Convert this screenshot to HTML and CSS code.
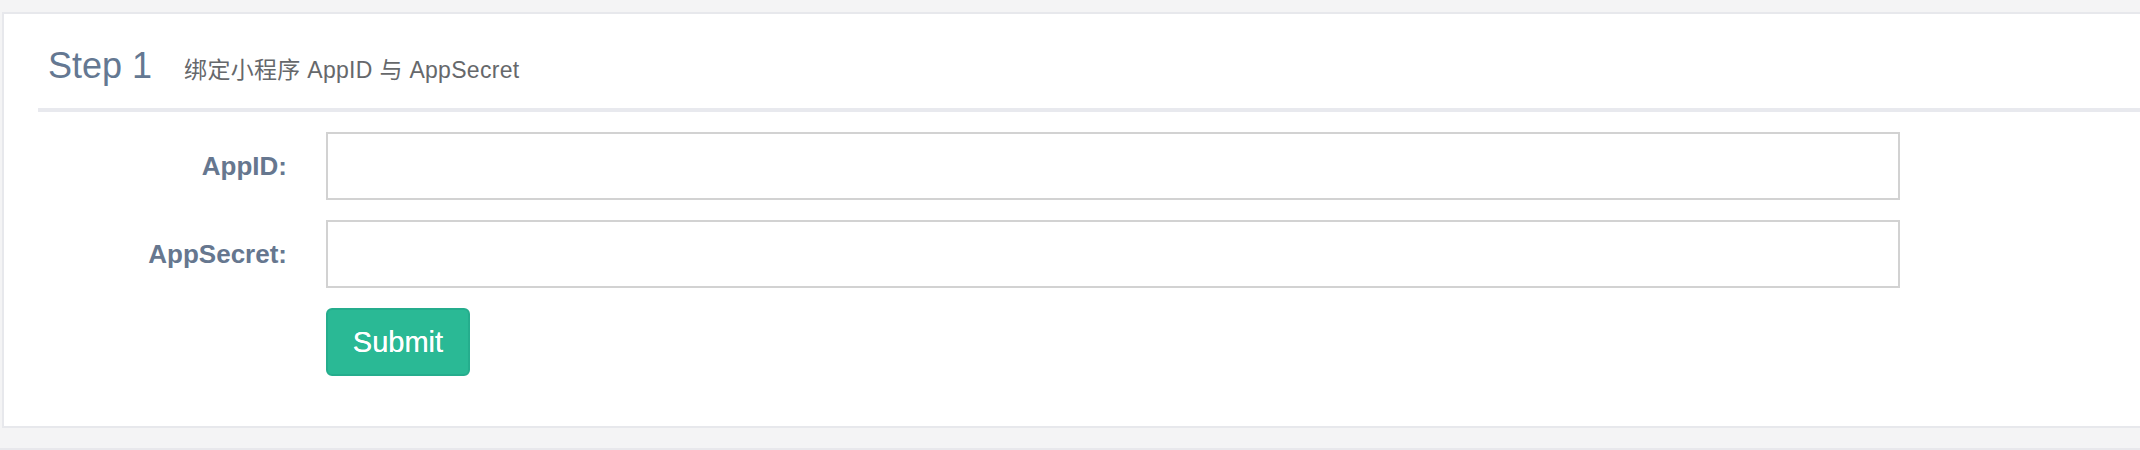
FILE: index.html
```html
<!DOCTYPE html>
<html lang="zh-CN">
<head>
<meta charset="utf-8">
<title>Step 1</title>
<link rel="stylesheet" href="styles.css">
</head>
<body>
<div class="page">
  <section class="panel">
    <div class="panel-inner">
      <header class="panel-head">
        <h2 class="step">Step 1</h2>
        <span class="subtitle">绑定小程序 AppID 与 AppSecret</span>
      </header>
      <form class="form">
        <label class="label" for="appid">AppID:</label>
        <input class="input" id="appid" type="text">
        <label class="label" for="appsecret">AppSecret:</label>
        <input class="input" id="appsecret" type="text">
        <div class="spacer"></div>
        <div class="actions"><button type="button" class="btn">Submit</button></div>
      </form>
    </div>
  </section>
  <div class="bottom-line"></div>
</div>
</body>
</html>
```

FILE: styles.css
```css
html, body {
  margin: 0;
  padding: 0;
  background: #f4f4f5;
  font-family: "Liberation Sans", Arial, "Noto Sans CJK SC", sans-serif;
}

.page {
  padding: 12px 0 0 2px;
  height: 438px;
  position: relative;
}

.panel {
  background: #ffffff;
  border-top: 2px solid #e7e8ec;
  border-left: 2px solid #e7e8ec;
  border-bottom: 2px solid #e7e8ec;
  height: 412px;
  box-sizing: content-box;
}

.panel-inner {
  padding-left: 34px;
}

.panel-head {
  display: flex;
  align-items: baseline;
  padding: 32px 10px 22px;
  border-bottom: 4px solid #e8e9ee;
}

.step {
  margin: 0;
  font-size: 36px;
  line-height: 40px;
  font-weight: normal;
  color: #647892;
}

.subtitle {
  margin-left: 32px;
  font-size: 23px;
  line-height: 26px;
  letter-spacing: 0.3px;
  color: #66686b;
  font-family: "Liberation Sans", Arial, "Noto Sans CJK SC", sans-serif;
}

.form {
  display: grid;
  grid-template-columns: 249px 1574px;
  column-gap: 39px;
  row-gap: 20px;
  padding-top: 20px;
  align-items: center;
}

.label {
  text-align: right;
  font-size: 26px;
  font-weight: bold;
  color: #66778f;
}

.input {
  height: 68px;
  box-sizing: border-box;
  border: 2px solid #d2d2d2;
  background: #fff;
  margin: 0;
  padding: 0 20px;
  font-size: 26px;
}

.btn {
  width: 144px;
  height: 68px;
  border: 2px solid #25ad8d;
  border-radius: 6px;
  background: #2ab995;
  color: #ffffff;
  font-family: "Liberation Sans", Arial, sans-serif;
  font-size: 29px;
  padding: 0;
  cursor: pointer;
  text-shadow: 0 0 0.6px #ffffff;
}

.bottom-line {
  position: absolute;
  left: 0;
  right: 0;
  bottom: 0;
  height: 2px;
  background: #e8e8ec;
}
```
